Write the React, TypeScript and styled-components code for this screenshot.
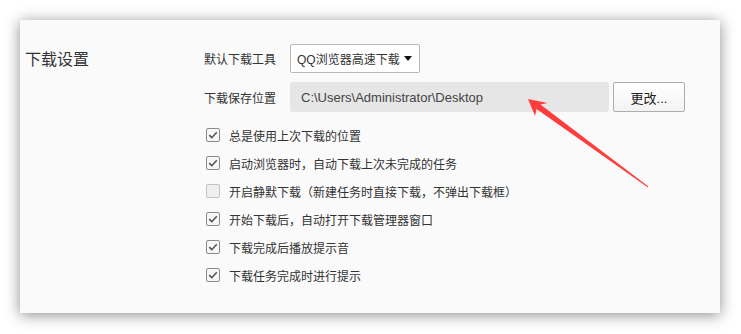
import React from 'react'
import styled, { createGlobalStyle } from 'styled-components'

const GlobalStyle = createGlobalStyle`
  html, body {
    margin: 0;
    padding: 0;
    background: #ffffff;
  }
  body {
    font-family: "Liberation Sans", "Noto Sans CJK SC", sans-serif;
    color: #333;
  }
`

const Page = styled.div`
  width: 741px;
  height: 334px;
  padding: 20px 0 0 20px;
  box-sizing: border-box;
`

const Panel = styled.div`
  position: relative;
  width: 700px;
  height: 293px;
  box-sizing: border-box;
  background: #fafafa;
  box-shadow: 0 2px 14px rgba(0, 0, 0, 0.45);
  display: flex;
  padding: 24px 0 0 5px;
`

const Title = styled.div`
  width: 179px;
  font-size: 16px;
  line-height: 31px;
  color: #333;
`

const Content = styled.div`
  display: flex;
  flex-direction: column;
`

const FieldRow = styled.div<{ $gap?: number }>`
  display: flex;
  align-items: center;
  margin-bottom: ${p => p.$gap ?? 9}px;
`

const Label = styled.div`
  width: 86px;
  font-size: 12px;
  color: #333;
`

const Select = styled.div`
  width: 130px;
  height: 29px;
  box-sizing: border-box;
  border: 1px solid #b8b8b8;
  border-radius: 2px;
  background: #fff;
  display: flex;
  align-items: center;
  justify-content: space-between;
  padding: 0 7px 0 6px;
  font-size: 12px;
  white-space: nowrap;
  color: #333;
`

const Caret = styled.span`
  flex: none;
  width: 0;
  height: 0;
  border-left: 4px solid transparent;
  border-right: 4px solid transparent;
  border-top: 5px solid #111;
`

const PathBox = styled.div`
  width: 319px;
  height: 30px;
  box-sizing: border-box;
  background: #e6e6e6;
  border-radius: 3px;
  display: flex;
  align-items: center;
  padding-left: 11px;
  font-size: 13px;
  color: #444;
`

const Button = styled.div`
  margin-left: 4px;
  width: 72px;
  height: 30px;
  box-sizing: border-box;
  border: 1px solid #adadad;
  border-radius: 2px;
  background: linear-gradient(#ffffff, #f3f3f3);
  display: flex;
  align-items: center;
  justify-content: center;
  font-size: 13px;
  color: #222;
`

const OptionList = styled.div`
  display: flex;
  flex-direction: column;
  margin-top: -1px;
`

const OptionRow = styled.div`
  display: flex;
  align-items: center;
  height: 28px;
  padding-left: 2px;
  font-size: 12px;
  color: #333;
`

const Box = styled.span<{ $checked: boolean }>`
  width: 14px;
  height: 14px;
  box-sizing: border-box;
  border: 1px solid ${p => (p.$checked ? '#8a8a8a' : '#c4c4c4')};
  border-radius: 2px;
  background: ${p => (p.$checked ? '#f7f7f7' : '#efefef')};
  margin-right: 9px;
  display: flex;
  align-items: center;
  justify-content: center;
`

const ArrowLayer = styled.svg`
  position: absolute;
  top: 0;
  left: 0;
  pointer-events: none;
`

const options = [
  { text: '总是使用上次下载的位置', checked: true },
  { text: '启动浏览器时，自动下载上次未完成的任务', checked: true },
  { text: '开启静默下载（新建任务时直接下载，不弹出下载框）', checked: false },
  { text: '开始下载后，自动打开下载管理器窗口', checked: true },
  { text: '下载完成后播放提示音', checked: true },
  { text: '下载任务完成时进行提示', checked: true },
]

function Check({ checked }: { checked: boolean }) {
  return (
    <Box $checked={checked}>
      {checked && (
        <svg width="12" height="12" viewBox="0 0 12 12">
          <path d="M2.2 6.2 L4.8 8.7 L9.8 3.2" fill="none" stroke="#555" strokeWidth="1.6" />
        </svg>
      )}
    </Box>
  )
}

export default function App() {
  return (
    <>
      <GlobalStyle />
      <Page>
        <Panel>
          <Title>下载设置</Title>
          <Content>
            <FieldRow>
              <Label>默认下载工具</Label>
              <Select>
                QQ浏览器高速下载
                <Caret />
              </Select>
            </FieldRow>
            <FieldRow $gap={10}>
              <Label>下载保存位置</Label>
              <PathBox>C:\Users\Administrator\Desktop</PathBox>
              <Button>更改...</Button>
            </FieldRow>
            <OptionList>
              {options.map(o => (
                <OptionRow key={o.text}>
                  <Check checked={o.checked} />
                  {o.text}
                </OptionRow>
              ))}
            </OptionList>
          </Content>
          <ArrowLayer width="700" height="293" viewBox="0 0 700 293">
            <polygon
              points="508,79 527.5,83 520.5,84.5 628.4,166.6 627.6,167.3 516.5,89 515,96"
              fill="#ff3d3d"
            />
          </ArrowLayer>
        </Panel>
      </Page>
    </>
  )
}
